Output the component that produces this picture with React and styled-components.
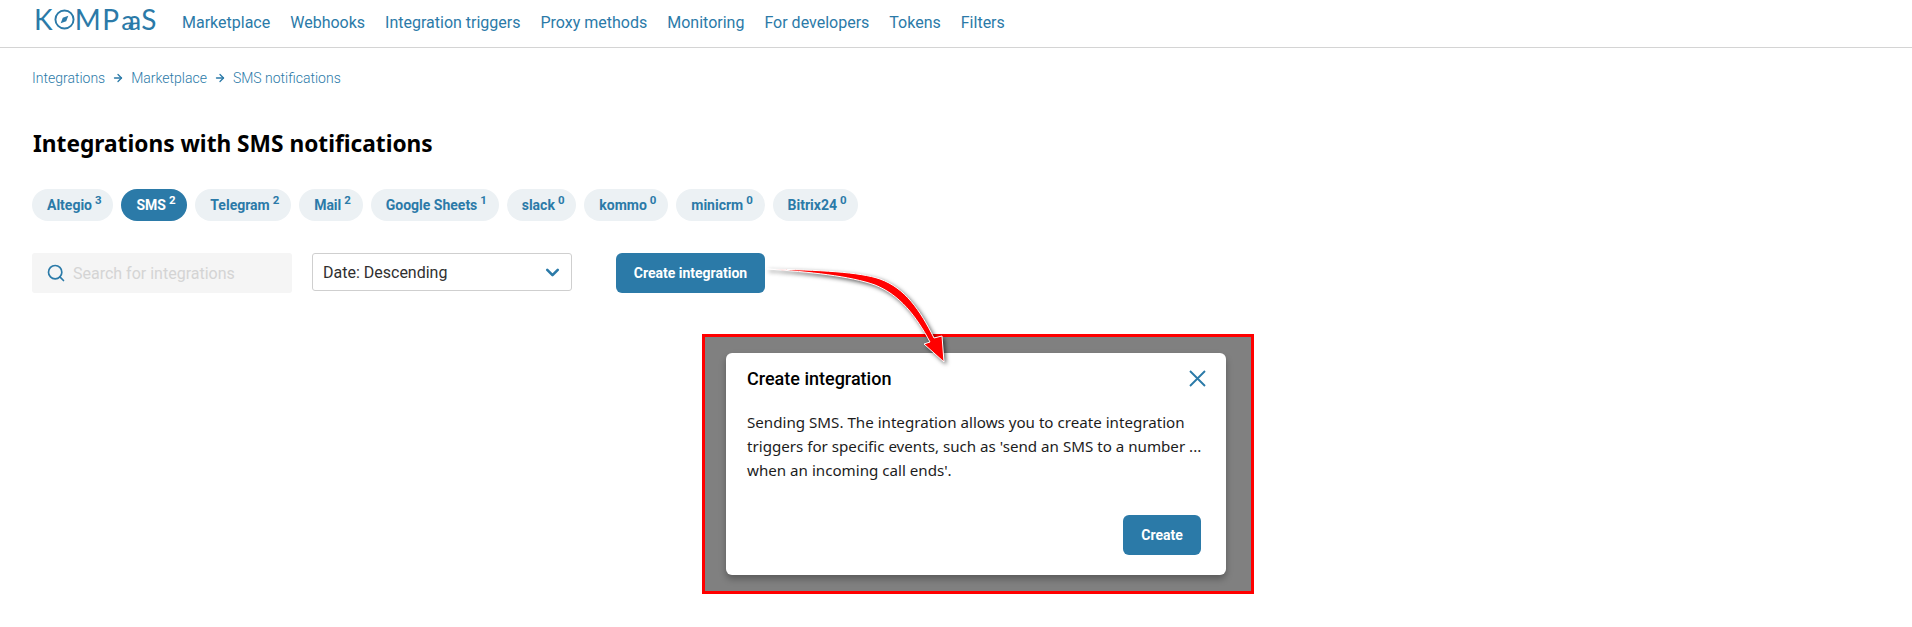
import React from 'react';
import styled, { createGlobalStyle } from 'styled-components';
import { Search, ChevronDown, ArrowRight } from 'lucide-react';

const blue = '#2b7aa8';

const GlobalStyle = createGlobalStyle`
    html, body {
        margin: 0;
        padding: 0;
        background: #fff;
        font-family: Roboto, sans-serif;
    }
`

const Page = styled.div`
    position: relative;
    width: 1912px;
    height: 627px;
    overflow: hidden;
`

const Header = styled.header`
    display: flex;
    align-items: center;
    height: 47px;
    padding-left: 34px;
    border-bottom: 1px solid #d4d4d4;
`

const Logo = styled.div`
    display: flex;
    align-items: center;
    width: 126px;
    height: 30px;
    margin-right: 22px;
    margin-top: -9px;
    color: ${blue};
    font-family: Lato, sans-serif;
    font-size: 28px;
    font-weight: 400;
    line-height: 30px;
    letter-spacing: 1.3px;
    white-space: nowrap;
`

const LogoSmall = styled.span`
    margin: 1px 7px 0 1px;
    font-size: 27px;
    letter-spacing: -7px;
`

const Nav = styled.nav`
    display: flex;
    gap: 20px;
    margin-top: -3px;
`

const NavLink = styled.a`
    color: ${blue};
    font-size: 16px;
`

const Content = styled.main`
    padding: 22px 0 0 32px;
`

const Crumbs = styled.div`
    display: flex;
    align-items: center;
    gap: 7px;
    height: 16px;
    color: ${blue};
    font-size: 14px;
    font-weight: 300;
`

const Title = styled.h1`
    margin: 41px 0 0 1px;
    height: 33px;
    color: #000;
    font-family: "Noto Sans", sans-serif;
    font-size: 22.7px;
    font-weight: 700;
    line-height: 33px;
`

const Chips = styled.div`
    display: flex;
    gap: 8px;
    margin-top: 29px;
`

const Chip = styled.div`
    display: flex;
    align-items: center;
    height: 32px;
    padding: 0 11.8px 0 15px;
    border-radius: 16px;
    background: ${props => (props.$active ? blue : '#ecf1f4')};
    color: ${props => (props.$active ? '#fff' : blue)};
    font-size: 14px;
    font-weight: 700;
`

const Count = styled.sup`
    margin-left: 3px;
    margin-top: -9px;
    font-size: 11.5px;
    line-height: 1;
    vertical-align: baseline;
`

const Controls = styled.div`
    display: flex;
    align-items: flex-start;
    margin-top: 32px;
`

const SearchBox = styled.div`
    display: flex;
    align-items: center;
    gap: 7px;
    width: 260px;
    height: 40px;
    padding-left: 14px;
    box-sizing: border-box;
    border-radius: 3px;
    background: #f5f5f5;
    color: ${blue};
`

const Placeholder = styled.span`
    color: #d4d4d4;
    font-size: 16px;
`

const Select = styled.div`
    display: flex;
    align-items: center;
    justify-content: space-between;
    width: 260px;
    height: 38px;
    margin-left: 20px;
    padding: 0 8px 0 10px;
    box-sizing: border-box;
    border: 1px solid #cfcfcf;
    border-radius: 3px;
    color: #303030;
    font-size: 16px;
`

const Button = styled.button`
    height: 40px;
    border: 0;
    border-radius: 6px;
    background: ${blue};
    color: #fff;
    font-family: Roboto, sans-serif;
    font-size: 14px;
    font-weight: 700;
`

const CreateButton = styled(Button)`
    width: 149px;
    margin-left: 44px;
`

const Frame = styled.section`
    width: 552px;
    height: 260px;
    margin: 41px 0 0 670px;
    padding: 16px 0 0 21px;
    box-sizing: border-box;
    border: 3px solid #ff0000;
    background: #808080;
`

const Modal = styled.div`
    display: flex;
    flex-direction: column;
    width: 500px;
    height: 222px;
    padding: 12px 20px 20px 21px;
    box-sizing: border-box;
    border-radius: 6px;
    background: #fff;
    box-shadow: 0 4px 7px rgba(0, 0, 0, 0.3);
`

const ModalHead = styled.div`
    display: flex;
    align-items: center;
    justify-content: space-between;
    height: 26px;
`

const ModalTitle = styled.h2`
    margin: 0;
    color: #000;
    font-size: 18px;
    font-weight: 500;
`

const ModalText = styled.p`
    margin: 19px 0 0;
    color: #1c1c1c;
    font-family: "Noto Sans", sans-serif;
    font-size: 15.15px;
    line-height: 24px;
`

const ModalFoot = styled.div`
    display: flex;
    justify-content: flex-end;
    margin-top: auto;
    padding-right: 5px;
`

const ModalButton = styled(Button)`
    width: 78px;
`

const Arrow = styled.svg`
    position: absolute;
    left: 750px;
    top: 255px;
    filter: drop-shadow(2px 2px 2px rgba(0, 0, 0, 0.6));
`

const chips = [
    ['Altegio', 3],
    ['SMS', 2, true],
    ['Telegram', 2],
    ['Mail', 2],
    ['Google Sheets', 1],
    ['slack', 0],
    ['kommo', 0],
    ['minicrm', 0],
    ['Bitrix24', 0],
];

const links = ['Marketplace', 'Webhooks', 'Integration triggers', 'Proxy methods', 'Monitoring', 'For developers', 'Tokens', 'Filters'];

const Compass = () => (
    <svg width="21" height="21" viewBox="0 0 22 22" fill="none">
        <circle cx="11" cy="11" r="9.5" stroke={blue} strokeWidth="2" />
        <path d="M15 7 L12.8 12.8 L7 15 L9.2 9.2 Z" fill={blue} />
    </svg>
);

const CloseIcon = () => (
    <svg width="17" height="17" viewBox="0 0 17 17" fill="none">
        <path d="M1 1 L16 16 M16 1 L1 16" stroke={blue} strokeWidth="1.9" />
    </svg>
);

const App = () => {
    return (
        <Page>
            <GlobalStyle />
            <Header>
                <Logo>
                    K<Compass />MP<LogoSmall>aa</LogoSmall>S
                </Logo>
                <Nav>
                    {links.map(link => <NavLink key={link}>{link}</NavLink>)}
                </Nav>
            </Header>
            <Content>
                <Crumbs>
                    Integrations <ArrowRight size={12} strokeWidth={2.6} /> Marketplace <ArrowRight size={12} strokeWidth={2.6} /> SMS notifications
                </Crumbs>
                <Title>Integrations with SMS notifications</Title>
                <Chips>
                    {chips.map(([name, count, active]) => (
                        <Chip key={name} $active={active}>
                            {name}<Count>{count}</Count>
                        </Chip>
                    ))}
                </Chips>
                <Controls>
                    <SearchBox>
                        <Search size={20} />
                        <Placeholder>Search for integrations</Placeholder>
                    </SearchBox>
                    <Select>
                        Date: Descending
                        <ChevronDown size={21} color={blue} strokeWidth={3} />
                    </Select>
                    <CreateButton>Create integration</CreateButton>
                </Controls>
                <Frame>
                    <Modal>
                        <ModalHead>
                            <ModalTitle>Create integration</ModalTitle>
                            <CloseIcon />
                        </ModalHead>
                        <ModalText>
                            Sending SMS. The integration allows you to create integration triggers for specific events, such as 'send an SMS to a number ... when an incoming call ends'.
                        </ModalText>
                        <ModalFoot>
                            <ModalButton>Create</ModalButton>
                        </ModalFoot>
                    </Modal>
                </Frame>
            </Content>
            <Arrow width="210" height="120" viewBox="750 255 210 120">
                <path
                    d="M767 269 C820 270 860 272 880 279 C905 288 920 310 934 338 L942 336 L944 362 L924 344 L930 342 C916 316 900 295 875 285 C850 276 810 272 767 269 Z"
                    fill="#ff0000"
                    stroke="#fff"
                    strokeWidth="1"
                />
            </Arrow>
        </Page>
    );
};

export default App;
